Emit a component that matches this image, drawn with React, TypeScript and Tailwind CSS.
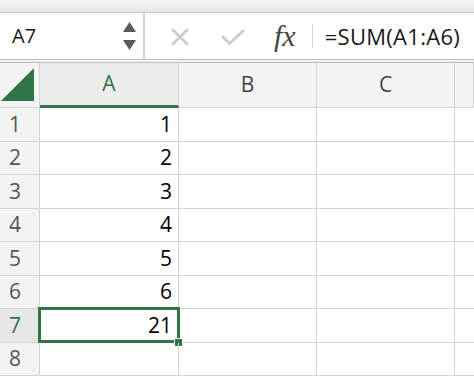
const rows = [1, 2, 3, 4, 5, 6, 7, 8];
const values: Record<number, string> = { 1: "1", 2: "2", 3: "3", 4: "4", 5: "5", 6: "6", 7: "21" };
const font = { fontFamily: '"Open Sans", "Liberation Sans", Arial, sans-serif' };

export default function App() {
  return (
    <div className="w-[474px] h-[381px] overflow-hidden bg-white text-[#1a1a1a]" style={font}>
      {/* title strip */}
      <div className="h-[13px] bg-gradient-to-b from-[#f4f4f4] to-[#e6e6e6] border-b border-[#c9c9c9]" />

      {/* formula bar */}
      <div className="flex h-[46px] bg-white">
        <div className="flex w-[145px] items-center justify-between border-r-2 border-[#d5d5d5] pl-[12px] pr-[7px]">
          <span className="text-[20px]">A7</span>
          <div className="flex flex-col gap-[8px]">
            <svg width="13" height="10" viewBox="0 0 13 10">
              <path d="M6.5 0 L13 10 L0 10 Z" fill="#5a5a5a" />
            </svg>
            <svg width="13" height="10" viewBox="0 0 13 10">
              <path d="M0 0 L13 0 L6.5 10 Z" fill="#5a5a5a" />
            </svg>
          </div>
        </div>
        <div className="flex flex-1 items-center pl-[25px]">
          <svg width="20" height="18" viewBox="0 0 20 18" className="mt-[2px]">
            <path d="M2 1 L18 17 M18 1 L2 17" stroke="#cccccc" strokeWidth="2.8" />
          </svg>
          <svg width="26" height="18" viewBox="0 0 26 18" className="ml-[30px] mt-[2px]">
            <path d="M2 8 L9.5 15.5 L24 2" stroke="#cccccc" strokeWidth="2.8" fill="none" />
          </svg>
          <span
            className="ml-[28px] text-[30px] italic leading-none text-[#444]"
            style={{ fontFamily: '"Liberation Serif", "DejaVu Serif", serif' }}
          >
            fx
          </span>
          <div className="ml-[16px] h-[24px] w-px bg-[#d8d8d8]" />
          <span className="ml-[12px] text-[22px] tracking-[0.3px]">=SUM(A1:A6)</span>
        </div>
      </div>

      {/* divider */}
      <div className="h-[4px] border-y border-[#bdbdbd] bg-[#f3f3f3]" />

      {/* grid */}
      <div className="grid grid-cols-[40px_139px_138px_138px_1fr]">
        <div className="flex h-[45px] items-end justify-end border-r border-b border-[#d4d4d4] bg-[#f3f3f3] pb-[6px] pr-[5px]">
          <svg width="33" height="33" viewBox="0 0 33 33">
            <path d="M33 0 L33 33 L0 33 Z" fill="#2f7548" />
          </svg>
        </div>
        <div className="flex h-[45px] items-center justify-center border-r border-b-[3px] border-r-[#d4d4d4] border-b-[#2f7548] bg-[#ececec] text-[21px] text-[#2f7548]">
          A
        </div>
        {["B", "C", ""].map((c) => (
          <div key={c} className="flex h-[45px] items-center justify-center border-r border-b border-[#d4d4d4] bg-[#f3f3f3] text-[21px] text-[#444]">
            {c}
          </div>
        ))}

        {rows.map((r) => (
          <Row key={r} r={r} />
        ))}
      </div>
    </div>
  );
}

function Row({ r }: { r: number }) {
  const sel = r === 7;
  return (
    <>
      <div
        className={`flex h-[33.5px] items-center border-r border-b border-[#d4d4d4] pl-[9px] text-[21px] ${
          sel ? "bg-[#e6e6e6] text-[#2f7548]" : "bg-[#f3f3f3] text-[#555]"
        }`}
      >
        {r}
      </div>
      <div className="relative flex h-[33.5px] items-center justify-end border-r border-b border-[#d4d4d4] pr-[6px] text-[21px] text-black">
        {values[r]}
        {sel && (
          <>
            <div className="absolute -left-[2px] -top-[2px] -right-[2px] -bottom-[1px] border-[3px] border-[#2f7548]" />
            <div className="absolute -right-[5px] -bottom-[5px] h-[9px] w-[9px] border border-white bg-[#2f7548]" />
          </>
        )}
      </div>
      <div className="h-[33.5px] border-r border-b border-[#d4d4d4]" />
      <div className="h-[33.5px] border-r border-b border-[#d4d4d4]" />
      <div className="h-[33.5px] border-b border-[#d4d4d4]" />
    </>
  );
}
